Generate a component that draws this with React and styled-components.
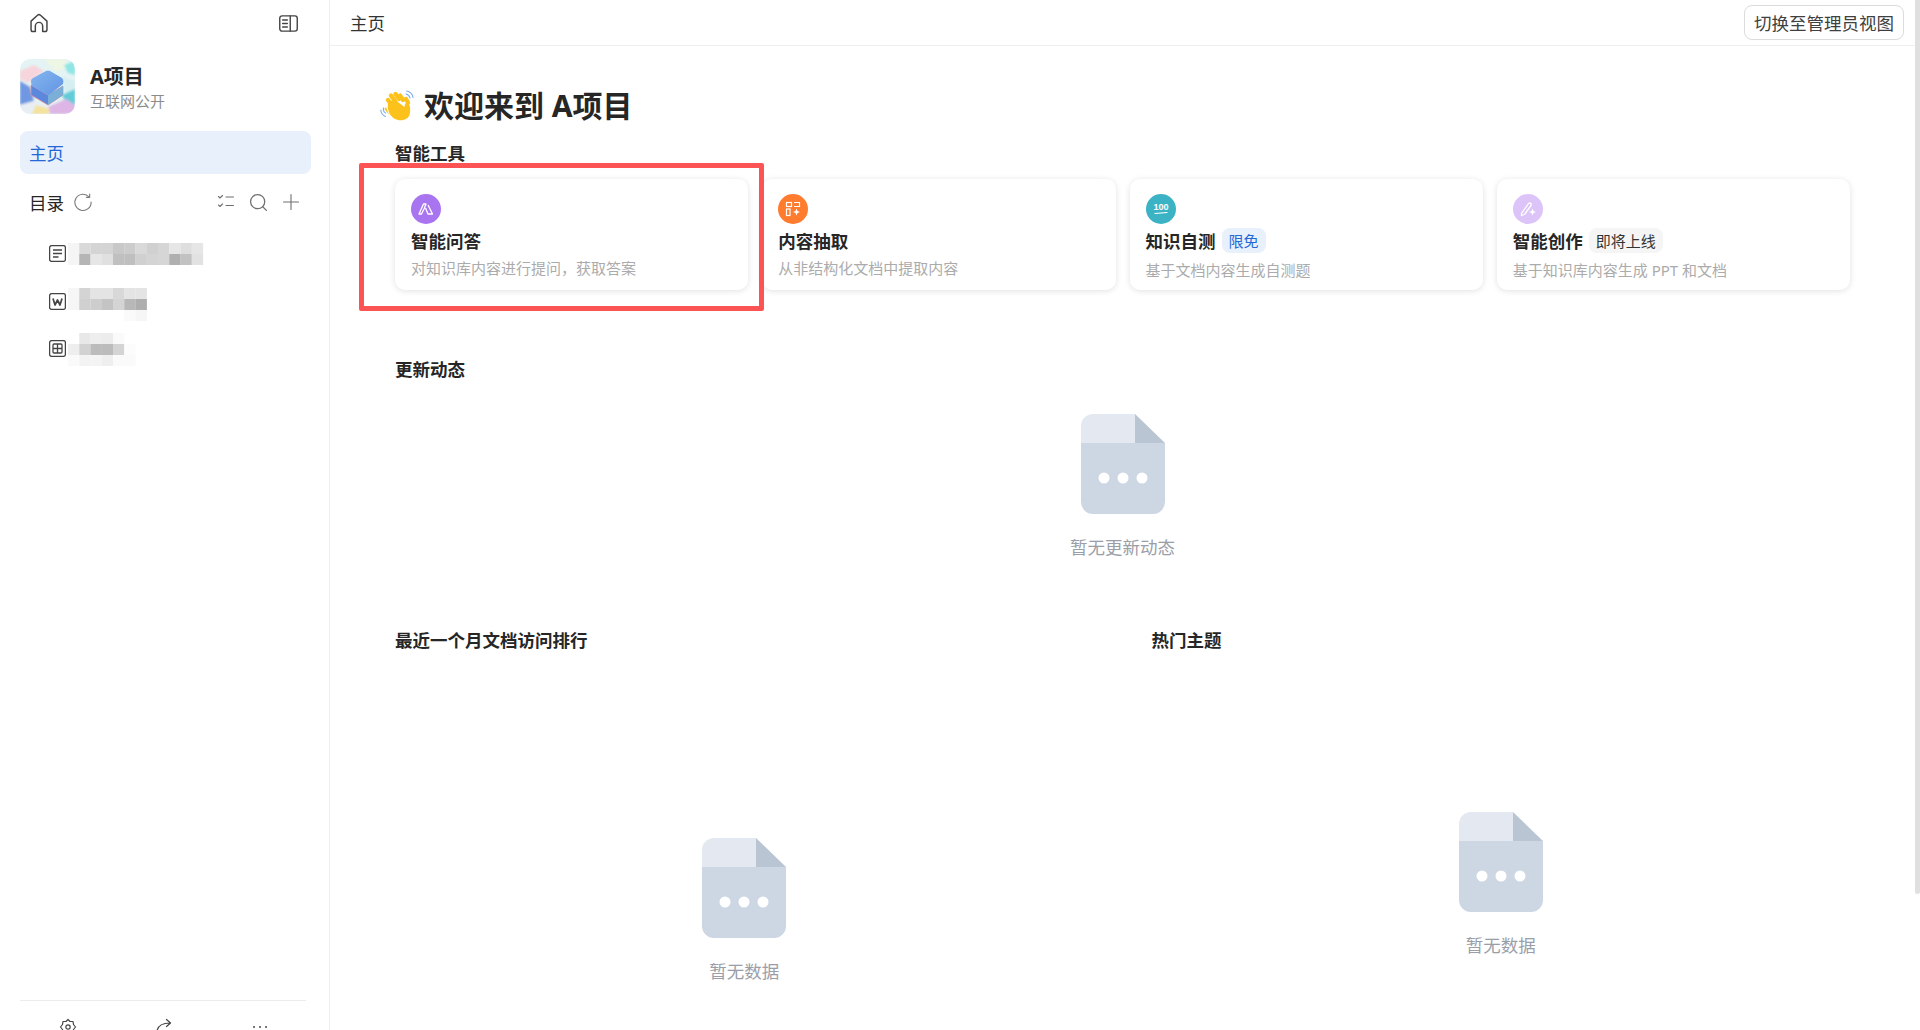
import React from 'react';
import styled, { createGlobalStyle } from 'styled-components';

const GlobalStyle = createGlobalStyle`
  html, body { margin: 0; padding: 0; height: 100%; overflow: hidden; background: #fff; }
  body { font-family: "Noto Sans", "Noto Sans CJK SC", sans-serif; color: #262626; }
  * { box-sizing: border-box; }
`;

const Page = styled.div`
  position: relative;
  display: flex;
  height: 100vh;
  overflow: hidden;
  padding-right: 5px;
`;

const ScrollThumb = styled.div`
  position: absolute;
  top: 0;
  right: 0;
  width: 5px;
  height: 894px;
  border-radius: 0 0 3px 3px;
  background: #e0e0e0;
`;

const Sidebar = styled.aside`
  width: 330px;
  height: 1045px;
  flex-shrink: 0;
  display: flex;
  flex-direction: column;
  padding: 0 18px 0 20px;
  border-right: 1px solid #efefef;
`;

const SideTop = styled.div`
  height: 46px;
  display: flex;
  align-items: center;
  justify-content: space-between;
  padding: 0 12px 0 8px;
  color: #444;
`;

const ProjectRow = styled.div`
  display: flex;
  align-items: center;
  gap: 15px;
  margin-top: 13px;
`;

const ProjectName = styled.div`
  font-size: 20px;
  font-weight: 700;
  line-height: 28px;
  color: #262626;
`;

const ProjectSub = styled.div`
  font-size: 15px;
  line-height: 20px;
  color: #8c8c8c;
`;

const NavItem = styled.div`
  height: 43px;
  margin-top: 17px;
  padding-left: 9px;
  display: flex;
  align-items: center;
  border-radius: 8px;
  background: #e8f0fb;
  color: #2468d8;
  font-size: 17.5px;
`;

const TreeHead = styled.div`
  height: 30px;
  margin-top: 13px;
  padding: 0 11px 0 9px;
  display: flex;
  align-items: center;
  font-size: 17.5px;
`;

const TreeTools = styled.div`
  margin-left: auto;
  display: flex;
  align-items: center;
  gap: 14px;
  color: #6f6f6f;
`;

const RefreshBtn = styled.span`
  display: flex;
  margin-left: 9px;
  color: #7a7a7a;
`;

const Tree = styled.div`
  margin-top: 13px;
  flex: 1;
`;

const TreeRow = styled.div`
  height: 47.5px;
  padding-left: 29px;
  display: flex;
  align-items: flex-start;
  gap: 2px;
  color: #444;
  & > svg:first-child { margin-top: 15px; flex-shrink: 0; }
`;

const Mosaic = styled.svg`
  display: block;
  margin-top: ${({ $top }) => $top}px;
`;

const SideFoot = styled.div`
  height: 45px;
  flex-shrink: 0;
  width: 286px;
  border-top: 1px solid #ececec;
  display: grid;
  grid-template-columns: repeat(3, 96px);
  padding: 17px 0 0 0;
  justify-items: center;
  color: #444;
`;

const Right = styled.div`
  flex: 1;
  height: 100vh;
  overflow: hidden;
`;

const Header = styled.header`
  height: 46px;
  padding: 0 11px 0 20px;
  display: flex;
  align-items: center;
  justify-content: space-between;
  background: #fff;
  border-bottom: 1px solid #efefef;
  font-size: 17.5px;
  color: #333;
`;

const SwitchBtn = styled.button`
  height: 35px;
  padding: 0 9px;
  border: 1px solid #dcdcdc;
  border-radius: 8px;
  background: #fff;
  font: inherit;
  color: #404040;
`;

const Content = styled.main`
  padding: 40px 65px 0;
`;

const Welcome = styled.h1`
  margin: 0 0 0 -15px;
  height: 40px;
  display: flex;
  align-items: center;
  gap: 10px;
  font-size: 30px;
  line-height: 40px;
  font-weight: 700;
  color: #262626;
`;

const SectionTitle = styled.h2`
  margin: ${({ $top }) => $top}px 0 0;
  font-size: 17.5px;
  line-height: 24px;
  font-weight: 700;
  color: #262626;
`;

const CardsWrap = styled.div`
  position: relative;
  margin-top: 14px;
  display: grid;
  grid-template-columns: repeat(4, 1fr);
  gap: 14px;
`;

const Highlight = styled.div`
  position: absolute;
  left: -36px;
  top: -16px;
  width: 405px;
  height: 148px;
  border: 5px solid #fc5454;
  border-radius: 2px;
  pointer-events: none;
`;

const Card = styled.div`
  height: 111px;
  padding: 15px 16px 0;
  border-radius: 10px;
  background: #fff;
  box-shadow: 0 1px 6px rgba(0, 0, 0, 0.12);
`;

const CardIcon = styled.div`
  width: 30px;
  height: 30px;
  border-radius: 50%;
  display: flex;
  align-items: center;
  justify-content: center;
  background: ${({ $bg }) => $bg};
`;

const CardTitle = styled.div`
  height: 25px;
  margin-top: 4px;
  display: flex;
  align-items: center;
  gap: 6px;
  font-size: 17.5px;
  font-weight: 700;
  color: #262626;
`;

const Tag = styled.span`
  height: 25px;
  padding: 0 7px;
  display: inline-flex;
  align-items: center;
  border-radius: 8px;
  font-size: 15px;
  font-weight: 400;
  background: ${({ $blue }) => ($blue ? '#e8f0fb' : '#f5f5f5')};
  color: ${({ $blue }) => ($blue ? '#2468d8' : '#333')};
`;

const CardDesc = styled.div`
  margin-top: ${({ $top }) => $top}px;
  font-size: 15px;
  line-height: 20px;
  color: #ababab;
`;

const Empty = styled.div`
  padding-top: ${({ $top }) => $top}px;
  display: flex;
  flex-direction: column;
  align-items: center;
  gap: 21px;
  font-size: 17.5px;
  line-height: 24px;
  color: #9a9ea8;
`;

const TwoCols = styled.div`
  margin-top: 69px;
  display: grid;
  grid-template-columns: 1fr 1fr;
  gap: 58px;
`;

const EmptyIcon = () => (
  <svg width="84" height="100" viewBox="0 0 84 100">
    <path d="M0 29H84V88a12 12 0 0 1-12 12H12A12 12 0 0 1 0 88Z" fill="#cdd6e3" />
    <path d="M0 29V12A12 12 0 0 1 12 0H54V29Z" fill="#e3e8f1" />
    <path d="M54 0L84 29H54Z" fill="#b9c5d3" />
    <circle cx="23" cy="64" r="5.5" fill="#fff" />
    <circle cx="42" cy="64" r="5.5" fill="#fff" />
    <circle cx="61" cy="64" r="5.5" fill="#fff" />
  </svg>
);

const Line = ({ size = 18, children, width = 1.5 }) => (
  <svg width={size} height={size} viewBox="0 0 18 18" fill="none" stroke="currentColor" strokeWidth={width} strokeLinecap="round" strokeLinejoin="round">
    {children}
  </svg>
);

const Logo = () => (
  <svg width="55" height="55" viewBox="0 0 55 55">
    <defs>
      <clipPath id="logoClip"><rect width="55" height="55" rx="10" /></clipPath>
      <filter id="logoBlur"><feGaussianBlur stdDeviation="1.2" /></filter>
      <linearGradient id="cubeTop" x1="0" y1="0" x2="1" y2="1">
        <stop offset="0" stopColor="#86b6ee" />
        <stop offset="1" stopColor="#5f94e4" />
      </linearGradient>
    </defs>
    <g clipPath="url(#logoClip)">
      <rect width="55" height="55" fill="#e4f3f3" />
      <g filter="url(#logoBlur)">
        <path d="M0 12L14 6 24 12 8 24 0 20Z" fill="#f6d6dc" />
        <path d="M24 0H44L50 8 36 12Z" fill="#eef6e4" />
        <path d="M44 6L55 2V16L48 14Z" fill="#8fe6e4" />
        <path d="M42 18L55 22V34L46 36Z" fill="#d5eef2" />
        <path d="M0 22L10 28 14 42 0 46Z" fill="#6f98e2" />
        <path d="M14 42L28 48 24 55H4L0 46Z" fill="#e9eef4" />
        <path d="M42 36L55 30V46L46 44Z" fill="#62ccd8" />
        <path d="M28 48L46 40 55 46V55H30Z" fill="#deb6e6" />
        <path d="M16 46L30 50 28 55H12Z" fill="#f4e39c" />
      </g>
      <path d="M11 26L28 36 43 27V36L28 46 11 36Z" fill="#5b88dc" stroke="#e88a9c" strokeWidth="0.8" />
      <path d="M28 36L43 27V36L28 46Z" fill="#7ab0d8" />
      <path d="M11 22Q11 20 13 19L26 12Q28 11 30 12L42 19Q44 21 43 25L30 35Q28 37 26 35L12 27Q11 26 11 22Z" fill="url(#cubeTop)" />
    </g>
  </svg>
);

const WaveHand = () => (
  <svg width="34" height="32" viewBox="0 0 34 32" fill="none" strokeLinecap="round">
    <g stroke="#fcc21b" strokeWidth="4.4">
      <path d="M11 14L8 10" />
      <path d="M15 11L11 5.5" />
      <path d="M19 9L15.5 4" />
      <path d="M23 10L20 5.5" />
      <path d="M28 12.500L26 9" />
    </g>
    <path d="M8 13C7 19 9 25 14 28.500C19 31.500 27 31 29.500 25C31 20 30 15 28 12C26 12 24.500 14 24.500 17L14 9Z" fill="#fcc21b" />
    <path d="M6 17C7 16 5 18 4.500 19L9 25Z" fill="#fcc21b" />
    <g stroke="#7eb0ee" strokeWidth="1.1">
      <path d="M26 4C28 4.500 29.500 6 30 8" />
      <path d="M26.500 1C30 1.500 32.500 4 33 7.500" />
      <path d="M3.500 18C3 20 4 22 5.500 23" />
      <path d="M0.800 20C1 23 3 25.500 5.500 26.500" />
    </g>
  </svg>
);

const mosaics = [
  { top: 13, rows: [
    ['f5', 'd9', 'd4', 'd4', 'c8', 'cc', 'd9', 'd0', 'd6', 'e6', 'de', 'e6'],
    ['f5', 'b5', 'e6', 'e0', 'c0', 'bf', 'd0', 'd4', 'd6', 'b0', 'c2', 'e2'],
  ] },
  { top: 10, rows: [
    ['f6', 'd4', 'e4', 'e4', 'd8', 'e4', 'e4'],
    ['f6', 'd0', 'cd', 'c4', 'd4', 'b8', 'ae'],
    ['ff', 'ff', 'ff', 'ff', 'ff', 'fa', 'f6'],
  ] },
  { top: 8, rows: [
    ['ff', 'e8', 'ee', 'ec', 'fa'],
    ['ee', 'd2', 'bc', 'bc', 'd4', 'fc'],
    ['fa', 'f3', 'f4', 'ef', 'fa', 'fa'],
  ] },
];

const Blur = ({ top, rows }) => (
  <Mosaic $top={top} width="136" height={rows.length * 11} viewBox={`0 0 136 ${rows.length * 11}`}>
    {rows.map((row, y) =>
      row.map((c, x) => <rect key={`${x}-${y}`} x={x * 11.25} y={y * 11} width="11.4" height="11.2" fill={`#${c}${c}${c}`} />)
    )}
  </Mosaic>
);

const treeIcons = [
  <svg key="doc" width="17" height="17" viewBox="0 0 17 17" fill="none" stroke="currentColor" strokeWidth="1.3">
    <rect x="0.600" y="0.600" width="15.800" height="15.800" rx="2" />
    <path d="M4 5H13M4 8.500H13M4 12H9.500" />
  </svg>,
  <svg key="word" width="17" height="17" viewBox="0 0 17 17" fill="none" stroke="currentColor" strokeWidth="1.3">
    <rect x="0.600" y="0.600" width="15.800" height="15.800" rx="2" />
    <path d="M4 5.500L6 12 8.500 7 11 12 13 5.500" strokeWidth="1.700" strokeLinejoin="round" />
  </svg>,
  <svg key="sheet" width="17" height="17" viewBox="0 0 17 17" fill="none" stroke="currentColor" strokeWidth="1.3">
    <rect x="0.600" y="0.600" width="15.800" height="15.800" rx="2" />
    <rect x="4" y="4" width="9" height="9" rx="1" />
    <path d="M8.500 4V13M4 8.500H13" />
  </svg>,
];

export default function App() {
  return (
    <>
      <GlobalStyle />
      <Page>
        <Sidebar>
          <SideTop>
            <Line size={22} width={1.2}>
              <path d="M2.500 7.500L8 2.500Q9 1.700 10 2.500L15.500 7.500V14.500Q15.500 16 14 16H12V11.500A3 3 0 0 0 6 11.500V16H4Q2.500 16 2.500 14.500Z" />
            </Line>
            <Line size={21} width={1.2}>
              <rect x="1.500" y="2.500" width="15" height="13" rx="2" />
              <path d="M10.500 2.500V15.500M4 6H8M4 9H8M4 12H8" />
            </Line>
          </SideTop>
          <ProjectRow>
            <Logo />
            <div>
              <ProjectName>A项目</ProjectName>
              <ProjectSub>互联网公开</ProjectSub>
            </div>
          </ProjectRow>
          <NavItem>主页</NavItem>
          <TreeHead>
            目录
            <RefreshBtn>
              <Line size={20} width={1}>
                <path d="M14.500 4.500A7.300 7.300 0 1 0 16.300 9" />
                <path d="M15 1.800V4.800H12" />
              </Line>
            </RefreshBtn>
            <TreeTools>
              <Line size={18} width={1.1}>
                <path d="M1.500 3.500L3 5 5.500 2.500M1.500 12L3 13.500 5.500 11M9 4H16.500M9 12.500H16.500" />
              </Line>
              <Line size={19} width={1.2}>
                <circle cx="8.200" cy="8.200" r="6.700" />
                <path d="M13 13L16.500 16.500" />
              </Line>
              <Line size={18} width={1.1}>
                <path d="M9 1.500V16.500M1.500 9H16.500" />
              </Line>
            </TreeTools>
          </TreeHead>
          <Tree>
            {mosaics.map((m, i) => (
              <TreeRow key={i}>
                {treeIcons[i]}
                <Blur top={m.top} rows={m.rows} />
              </TreeRow>
            ))}
          </Tree>
          <SideFoot>
            <Line size={18} width={1.2}>
              <path d="M9 1.500L11 3.500H14L14.500 6.500L16.500 9L14.500 11.500L14 14.500H11L9 16.500L7 14.500H4L3.500 11.500L1.500 9L3.500 6.500L4 3.500H7Z" />
              <circle cx="9" cy="9" r="2.200" />
            </Line>
            <Line size={18} width={1.2}>
              <path d="M2 13C3 7.500 7 5 15 5M11.500 1.500L15.500 5 11.500 8.500M2 16.500H16" />
            </Line>
            <Line size={18} width={1.800}>
              <path d="M3 9H3.100M9 9H9.100M15 9H15.100" />
            </Line>
          </SideFoot>
        </Sidebar>

        <Right>
          <Header>
            主页
            <SwitchBtn>切换至管理员视图</SwitchBtn>
          </Header>
          <Content>
            <Welcome>
              <WaveHand />
              欢迎来到 A项目
            </Welcome>
            <SectionTitle $top={15}>智能工具</SectionTitle>
            <CardsWrap>
              <Card>
                <CardIcon $bg="#a974f0">
                  <svg width="18" height="18" viewBox="0 0 18 18" fill="none" stroke="#fff" strokeWidth="1.300" strokeLinejoin="round">
                    <path d="M2 14L6.500 4H9L7 9 4.500 14ZM8.500 8L11 14H15.500L11 5" />
                  </svg>
                </CardIcon>
                <CardTitle>智能问答</CardTitle>
                <CardDesc $top={5}>对知识库内容进行提问，获取答案</CardDesc>
              </Card>
              <Card>
                <CardIcon $bg="#ff7b2e">
                  <svg width="18" height="18" viewBox="0 0 18 18" fill="none" stroke="#fff" strokeWidth="1.200">
                    <rect x="2.500" y="2.500" width="5" height="4" />
                    <rect x="2.500" y="9" width="3.500" height="6.500" />
                    <path d="M10 2.500H15.500V6.500H10" />
                    <path d="M12.500 8.500L13.500 11 16 12 13.500 13 12.500 15.500 11.500 13 9 12 11.500 11Z" fill="#fff" stroke="none" />
                  </svg>
                </CardIcon>
                <CardTitle>内容抽取</CardTitle>
                <CardDesc $top={5}>从非结构化文档中提取内容</CardDesc>
              </Card>
              <Card>
                <CardIcon $bg="#3bb3c4">
                  <svg width="22" height="22" viewBox="0 0 22 22" fill="none">
                    <text x="11" y="11.500" textAnchor="middle" fontSize="9" fontWeight="700" fill="#fff" fontFamily="Liberation Sans Narrow, Liberation Sans, sans-serif">100</text>
                    <path d="M5 15.500L17 14.500" stroke="#fff" strokeWidth="1.200" strokeLinecap="round" />
                  </svg>
                </CardIcon>
                <CardTitle>知识自测<Tag $blue>限免</Tag></CardTitle>
                <CardDesc $top={7}>基于文档内容生成自测题</CardDesc>
              </Card>
              <Card>
                <CardIcon $bg="#dcc4f8">
                  <svg width="20" height="20" viewBox="0 0 20 20" fill="none" stroke="#fff" strokeWidth="1.300" strokeLinejoin="round">
                    <path d="M3.500 14.500L10.500 4.500Q12 3.500 13 4.500Q13.500 5.500 13 6.500L6.500 15.500L3.500 16.500Z" />
                    <path d="M14.500 9.500L15.500 12 18 13 15.500 14 14.500 16.500 13.500 14 11 13 13.500 12Z" fill="#fff" stroke="none" />
                  </svg>
                </CardIcon>
                <CardTitle>智能创作<Tag>即将上线</Tag></CardTitle>
                <CardDesc $top={7}>基于知识库内容生成 PPT 和文档</CardDesc>
              </Card>
              <Highlight />
            </CardsWrap>

            <SectionTitle $top={67}>更新动态</SectionTitle>
            <Empty $top={33}>
              <EmptyIcon />
              暂无更新动态
            </Empty>

            <TwoCols>
              <div>
                <SectionTitle $top={0}>最近一个月文档访问排行</SectionTitle>
                <Empty $top={186}>
                  <EmptyIcon />
                  暂无数据
                </Empty>
              </div>
              <div>
                <SectionTitle $top={0}>热门主题</SectionTitle>
                <Empty $top={160}>
                  <EmptyIcon />
                  暂无数据
                </Empty>
              </div>
            </TwoCols>
          </Content>
        </Right>
        <ScrollThumb />
      </Page>
    </>
  );
}
